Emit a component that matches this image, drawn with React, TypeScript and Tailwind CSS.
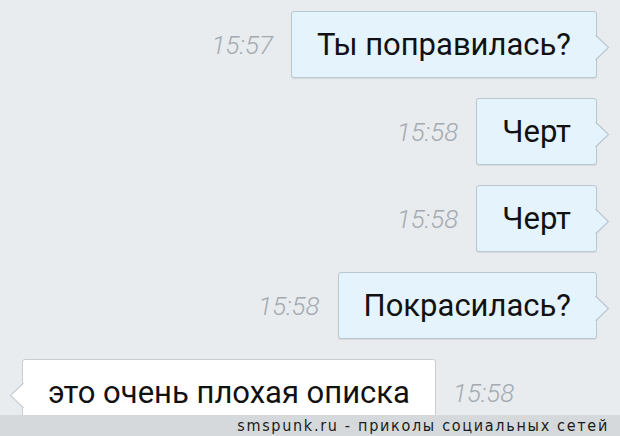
const font = { fontFamily: "Roboto, 'Noto Sans', sans-serif" };

function Tail({ side, fill, stroke }: { side: "left" | "right"; fill: string; stroke: string }) {
	if (side === "right") {
		return (
			<svg className="absolute top-[23px] right-[-14px]" width="15" height="25" viewBox="0 0 15 25">
				<path d="M0 0 L13.5 12.5 L0 25 Z" fill={fill} />
				<path d="M0.5 0 L13.5 12.5 L0.5 25" fill="none" stroke={stroke} strokeWidth="1.2" />
			</svg>
		);
	}
	return (
		<svg className="absolute top-[23px] left-[-14px]" width="15" height="25" viewBox="0 0 15 25">
			<path d="M15 0 L1.5 12.5 L15 25 Z" fill={fill} />
			<path d="M14.5 0 L1.5 12.5 L14.5 25" fill="none" stroke={stroke} strokeWidth="1.2" />
		</svg>
	);
}

function Outgoing({ text, time }: { text: string; time: string }) {
	return (
		<div className="flex items-center justify-end gap-[18px] pr-[23px]">
			<span className="text-[26px] italic font-light text-[#a4aab0] leading-none">{time}</span>
			<div className="relative h-[67px] flex items-center px-[25px] bg-[#e5f3fc] border border-[#b8c7d2] rounded-[3px] shadow-[0_1px_1px_rgba(0,0,0,0.08)]">
				<span className="text-[31px] text-[#111] leading-none">{text}</span>
				<Tail side="right" fill="#e5f3fc" stroke="#b8c7d2" />
			</div>
		</div>
	);
}

export default function App() {
	return (
		<div className="w-[620px] h-[436px] flex flex-col bg-[#e8ecef] overflow-hidden" style={font}>
			<div className="flex-1 flex flex-col gap-[20px] pt-[11px] overflow-hidden">
				<Outgoing text="Ты поправилась?" time="15:57" />
				<Outgoing text="Черт" time="15:58" />
				<Outgoing text="Черт" time="15:58" />
				<Outgoing text="Покрасилась?" time="15:58" />

				<div className="flex items-center gap-[17px] pl-[22px]">
					<div className="relative h-[67px] flex items-center px-[25px] bg-white border border-[#c9ced3] rounded-[3px]">
						<span className="text-[31px] text-[#111] leading-none">это очень плохая описка</span>
						<Tail side="left" fill="#ffffff" stroke="#c9ced3" />
					</div>
					<span className="text-[26px] italic font-light text-[#a4aab0] leading-none">15:58</span>
				</div>
			</div>

			<div className="h-[21px] shrink-0 bg-[#d6d9dc] flex items-center justify-end pr-[11px]">
				<span className="text-[16px] tracking-[1.7px] text-[#1b1b1b] leading-none" style={{ fontFamily: "'DejaVu Sans Condensed', 'DejaVu Sans', sans-serif" }}>
					smspunk.ru - приколы социальных сетей
				</span>
			</div>
		</div>
	);
}
